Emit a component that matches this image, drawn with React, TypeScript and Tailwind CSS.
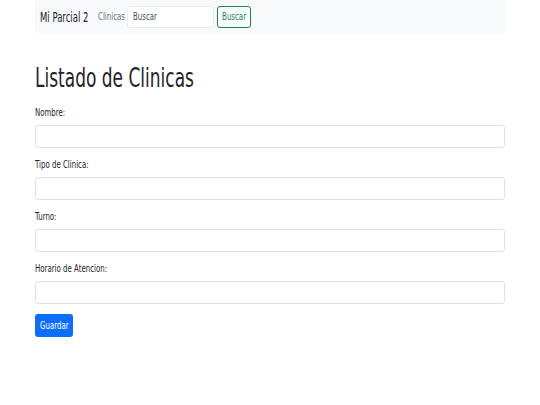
const FIELDS = ["Nombre:", "Tipo de Clinica:", "Turno:", "Horario de Atencion:"];

// The screenshot's text is squeezed horizontally, so text is drawn narrowed.
function T({ children, center = false, tight = false }: { children: React.ReactNode; center?: boolean; tight?: boolean }) {
  const origin = center ? "origin-center" : "origin-left";
  const scale = tight ? "scale-x-[0.63]" : "scale-x-[0.7]";
  return <span className={`inline-block shrink-0 whitespace-nowrap ${origin} ${scale}`}>{children}</span>;
}

export default function App() {
  return (
    <div className="min-h-[405px] bg-white text-[#212529]" style={{ fontFamily: '"DejaVu Sans", sans-serif' }}>
      <div className="mx-[35px]">
        {/* Navbar */}
        <nav className="flex h-[33px] items-center bg-[#f8f9fa] pl-[5px]">
          <div className="w-[58px] text-[13.5px] leading-[18px]">
            <T tight>Mi Parcial 2</T>
          </div>
          <div className="w-[29px] text-[10px] text-[#6c757d]">
            <T>Clinicas</T>
          </div>
          <div className="flex h-[22px] w-[87px] items-center rounded-[3px] border border-[#e9ecef] bg-white pl-[5px] text-[10px] text-[#495057]">
            <T>Buscar</T>
          </div>
          <button className="ml-[3px] flex h-[22px] w-[34px] items-center justify-center rounded-[3px] border border-[#198754] text-[10px] text-[#198754]">
            <T center>Buscar</T>
          </button>
        </nav>

        <h1 className="mt-[29px] text-[27px] leading-[32px] font-normal">
          <T tight>Listado de Clinicas</T>
        </h1>

        <form className="mt-[13px] flex flex-col">
          {FIELDS.map((f) => (
            <div key={f} className="mb-[11px]">
              <label className="block h-[13px] text-[10px] leading-[12px]">
                <T>{f}</T>
              </label>
              <input className="mt-[5px] block h-[23px] w-full rounded-[3px] border border-[#dee2e6] bg-white outline-none" />
            </div>
          ))}
          <div className="-mt-px">
            <button
              type="button"
              className="flex h-[23px] w-[38px] items-center justify-center rounded-[3px] bg-[#0d6efd] text-[10px] text-white"
            >
              <T center>Guardar</T>
            </button>
          </div>
        </form>
      </div>
    </div>
  );
}
